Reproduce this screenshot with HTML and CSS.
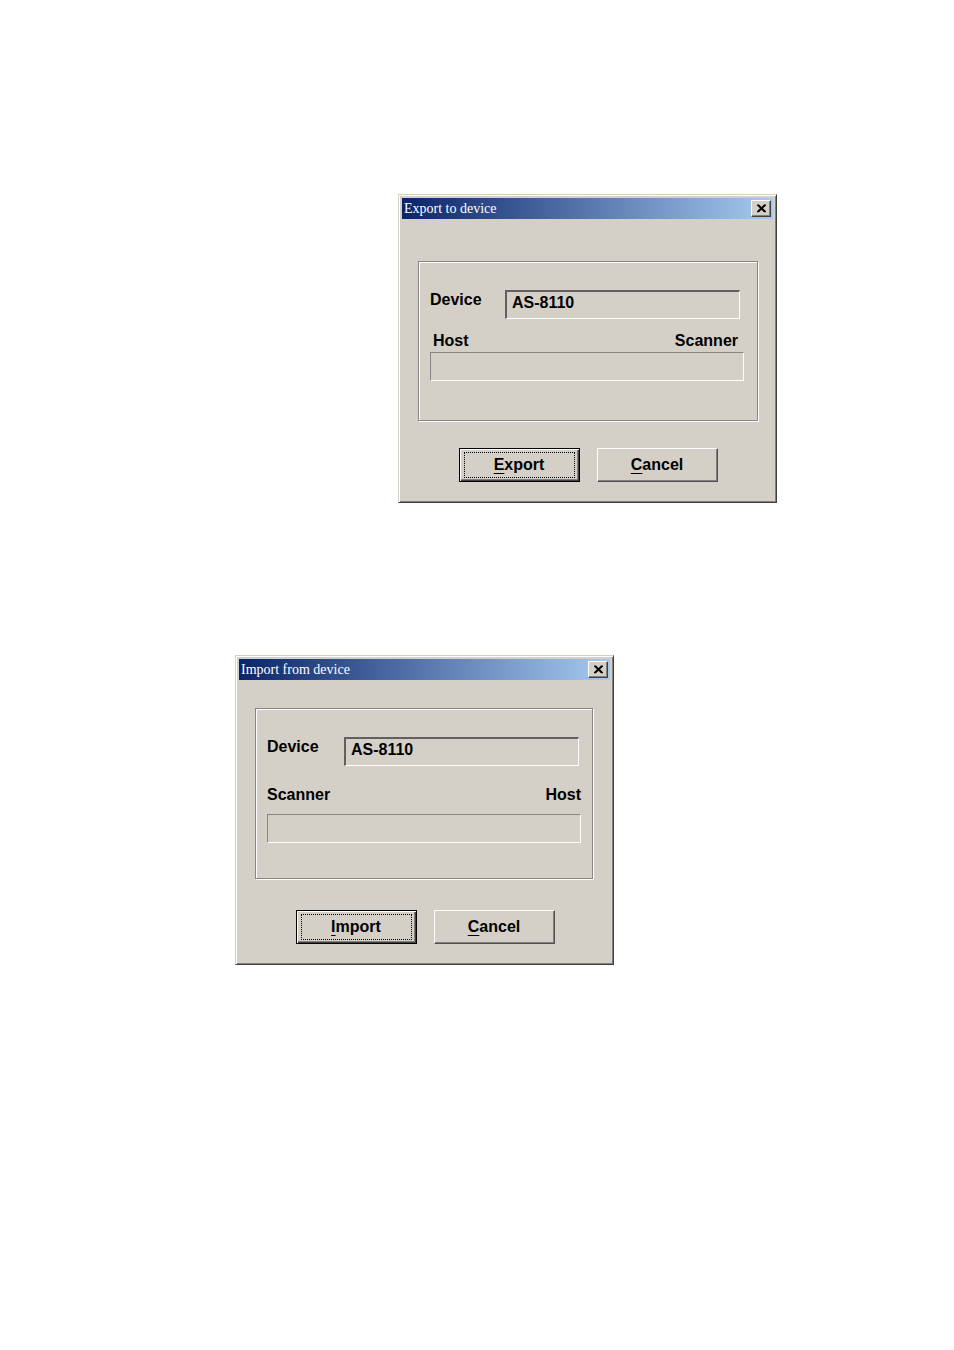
FILE: index.html
```html
<!DOCTYPE html>
<html lang="en">
<head>
  <meta charset="UTF-8">
  <meta name="viewport" content="width=device-width, initial-scale=1.0">
  <title>Export / Import</title>
  <link rel="stylesheet" href="styles.css">
</head>
<body>
  <main class="page">

    <!-- Export dialog -->
    <section class="dialog export" role="dialog" aria-labelledby="exportTitle">
      <header class="title-bar">
        <h2 class="title" id="exportTitle">Export to device</h2>
        <button type="button" class="close" aria-label="Close">
          <svg width="11" height="9" viewBox="0 0 11 9"><path d="M1 0.5h2l2.5 2.5L8 0.5h2v1L7 4.2l3 3v1H8L5.5 5.7 3 8.2H1v-1l3-3-3-2.7z" fill="#000"/></svg>
        </button>
      </header>
      <form class="dialog-body">
        <div class="group">
          <div class="field-row">
            <label for="exportDevice">Device</label>
            <input type="text" id="exportDevice" class="field" value="AS-8110" readonly>
          </div>
          <div class="ends">
            <span>Host</span>
            <span>Scanner</span>
          </div>
          <progress class="bar" value="0" max="100" aria-label="Host to Scanner"></progress>
        </div>
        <div class="buttons">
          <button type="button" class="btn default"><span class="focus"><u>E</u>xport</span></button>
          <button type="button" class="btn"><span><u>C</u>ancel</span></button>
        </div>
      </form>
    </section>

    <!-- Import dialog -->
    <section class="dialog import" role="dialog" aria-labelledby="importTitle">
      <header class="title-bar">
        <h2 class="title" id="importTitle">Import from device</h2>
        <button type="button" class="close" aria-label="Close">
          <svg width="11" height="9" viewBox="0 0 11 9"><path d="M1 0.5h2l2.5 2.5L8 0.5h2v1L7 4.2l3 3v1H8L5.5 5.7 3 8.2H1v-1l3-3-3-2.7z" fill="#000"/></svg>
        </button>
      </header>
      <form class="dialog-body">
        <div class="group">
          <div class="field-row">
            <label for="importDevice">Device</label>
            <input type="text" id="importDevice" class="field" value="AS-8110" readonly>
          </div>
          <div class="ends">
            <span>Scanner</span>
            <span>Host</span>
          </div>
          <progress class="bar" value="0" max="100" aria-label="Scanner to Host"></progress>
        </div>
        <div class="buttons">
          <button type="button" class="btn default"><span class="focus"><u>I</u>mport</span></button>
          <button type="button" class="btn"><span><u>C</u>ancel</span></button>
        </div>
      </form>
    </section>

  </main>
</body>
</html>
```
FILE: styles.css
```css
* {
  box-sizing: border-box;
}

body {
  margin: 0;
  background-color: #ffffff;
  color: #000000;
  font-family: "Liberation Sans", Arial, sans-serif;
  font-size: 16px;
  font-weight: bold;
  line-height: 20px;
}

.page {
  display: flex;
  flex-direction: column;
  align-items: flex-start;
  gap: 152px;
  padding: 194px 24px;
}

/* dialog window */
.dialog {
  width: 379px;
  max-width: 100%;
  padding: 3px;
  background-color: #d4d0c8;
  border: 1px solid;
  border-color: #d4d0c8 #404040 #404040 #d4d0c8;
  box-shadow: inset 1px 1px 0 #ffffff, inset -1px -1px 0 #808080;
}

.export {
  margin-left: 374px;
}

.import {
  margin-left: 211px;
}

.title-bar {
  display: flex;
  align-items: center;
  justify-content: space-between;
  height: 21px;
  padding: 0 2px;
  background: linear-gradient(to right, #0a246a, #a6caf0);
}

.title {
  margin: 0;
  color: #ffffff;
  font-family: "Liberation Serif", "Times New Roman", serif;
  font-size: 14px;
  font-weight: normal;
}

.close {
  display: flex;
  align-items: center;
  justify-content: center;
  width: 20px;
  height: 17px;
  padding: 0;
  background-color: #d4d0c8;
  border: 1px solid;
  border-color: #ffffff #404040 #404040 #ffffff;
  box-shadow: inset -1px -1px 0 #808080;
}

.dialog-body {
  padding: 42px 15px 17px 16px;
}

/* etched frame */
.group {
  padding: 28px 13px 39px 11px;
  border: 1px solid #868686;
  box-shadow: 1px 1px 0 #ffffff, inset 1px 1px 0 #ffffff;
}

.field-row {
  display: flex;
  align-items: flex-start;
  padding-right: 4px;
}

.field-row label {
  flex: 0 0 75px;
}

.field {
  flex: 1;
  min-width: 0;
  height: 29px;
  padding: 0 5px 4px;
  background-color: #d4d0c8;
  border: 2px solid;
  border-color: #606060 #ffffff #ffffff #606060;
  border-right-width: 1px;
  border-bottom-width: 1px;
  color: #000000;
  font: inherit;
  outline: none;
}

.ends {
  display: flex;
  justify-content: space-between;
  margin: 12px 0 1px;
  padding: 0 6px 0 3px;
}

.bar {
  display: block;
  width: 100%;
  height: 29px;
  appearance: none;
  background-color: #d4d0c8;
  border: 1px solid;
  border-color: #868686 #ffffff #ffffff #868686;
}

.bar::-webkit-progress-bar {
  background-color: #d4d0c8;
}

.bar::-webkit-progress-value {
  background-color: #0a246a;
}

.buttons {
  display: flex;
  justify-content: center;
  gap: 17px;
  margin-top: 27px;
}

.btn {
  width: 121px;
  height: 34px;
  padding: 2px;
  background-color: #d4d0c8;
  border: 1px solid;
  border-color: #ffffff #505050 #505050 #ffffff;
  box-shadow: inset -1px -1px 0 #808080;
  color: #000000;
  font: inherit;
}

.btn.default {
  border: 1px solid #000000;
  box-shadow: inset 1px 1px 0 #ffffff, inset -1px -1px 0 #404040, inset -2px -2px 0 #808080;
}

.focus {
  display: block;
  margin: 0 2px;
  padding: 2px 0;
  border: 1px dotted #000000;
}

.btn u {
  text-underline-offset: 3px;
  text-decoration-thickness: 1px;
}

/* import window has a looser layout */
.import .dialog-body {
  padding-top: 28px;
}

.import .group {
  margin-right: 2px;
  padding-right: 11px;
  padding-bottom: 35px;
}

.import .field-row {
  padding-right: 2px;
}

.import .field-row label {
  flex-basis: 77px;
}

.import .ends {
  margin: 19px 0 9px;
  padding: 0;
}

.import .buttons {
  margin-top: 31px;
}
```
